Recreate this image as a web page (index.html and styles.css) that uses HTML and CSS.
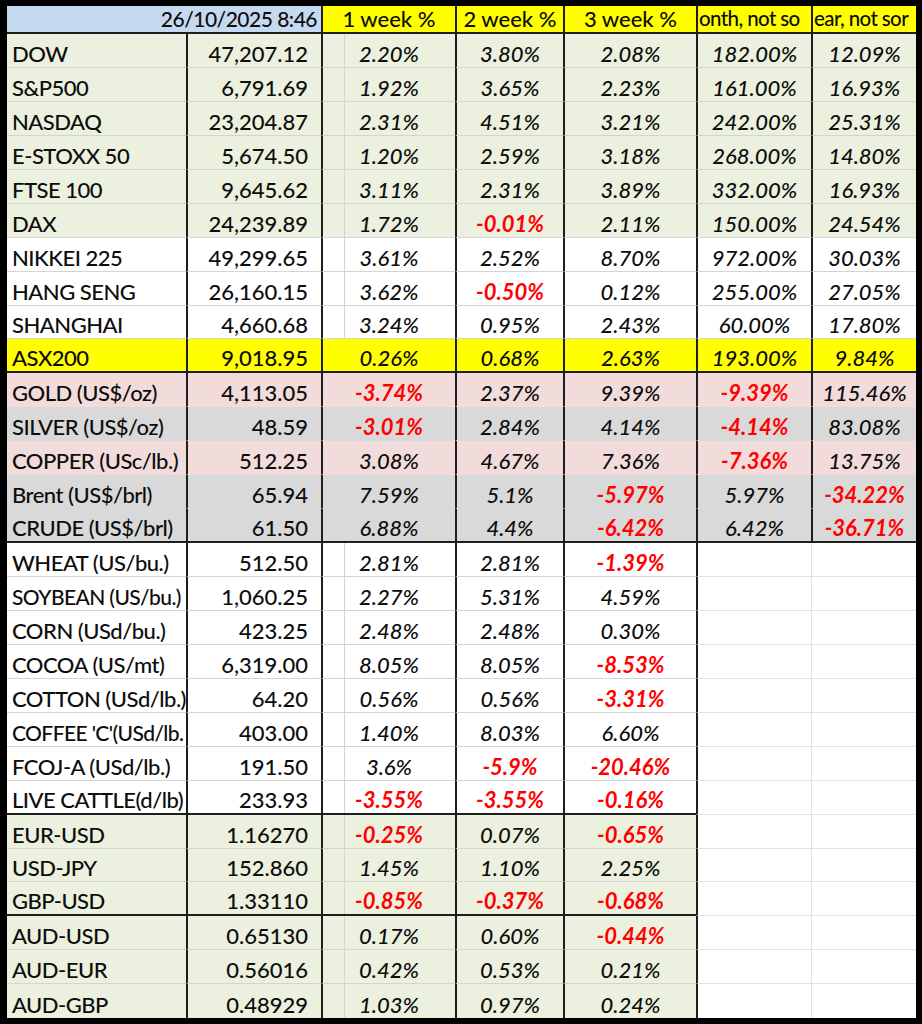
FILE: index.html
```html
<!DOCTYPE html>
<html>
<head>
<meta charset="utf-8">
<link rel="stylesheet" href="styles.css">
</head>
<body>
<div class="frame">
  <div class="sheet">
    <div class="hdr">
      <div class="date">26/10/2025 8:46</div>
      <div>1 week %</div>
      <div>2 week %</div>
      <div>3 week %</div>
      <div class="clip">onth, not so</div>
      <div class="clip">ear, not sor</div>
    </div>

    <div class="r gr"><div class="a">DOW</div><div class="b">47,207.12</div><div class="c">2.20%</div><div class="d">3.80%</div><div class="e">2.08%</div><div class="f">182.00%</div><div class="g">12.09%</div></div>
    <div class="r gr"><div class="a">S&amp;P500</div><div class="b">6,791.69</div><div class="c">1.92%</div><div class="d">3.65%</div><div class="e">2.23%</div><div class="f">161.00%</div><div class="g">16.93%</div></div>
    <div class="r gr"><div class="a">NASDAQ</div><div class="b">23,204.87</div><div class="c">2.31%</div><div class="d">4.51%</div><div class="e">3.21%</div><div class="f">242.00%</div><div class="g">25.31%</div></div>
    <div class="r gr"><div class="a">E-STOXX 50</div><div class="b">5,674.50</div><div class="c">1.20%</div><div class="d">2.59%</div><div class="e">3.18%</div><div class="f">268.00%</div><div class="g">14.80%</div></div>
    <div class="r gr"><div class="a">FTSE 100</div><div class="b">9,645.62</div><div class="c">3.11%</div><div class="d">2.31%</div><div class="e">3.89%</div><div class="f">332.00%</div><div class="g">16.93%</div></div>
    <div class="r gr"><div class="a">DAX</div><div class="b">24,239.89</div><div class="c">1.72%</div><div class="d neg">-0.01%</div><div class="e">2.11%</div><div class="f">150.00%</div><div class="g">24.54%</div></div>
    <div class="r wh"><div class="a">NIKKEI 225</div><div class="b">49,299.65</div><div class="c">3.61%</div><div class="d">2.52%</div><div class="e">8.70%</div><div class="f">972.00%</div><div class="g">30.03%</div></div>
    <div class="r wh"><div class="a">HANG SENG</div><div class="b">26,160.15</div><div class="c">3.62%</div><div class="d neg">-0.50%</div><div class="e">0.12%</div><div class="f">255.00%</div><div class="g">27.05%</div></div>
    <div class="r wh"><div class="a">SHANGHAI</div><div class="b">4,660.68</div><div class="c">3.24%</div><div class="d">0.95%</div><div class="e">2.43%</div><div class="f">60.00%</div><div class="g">17.80%</div></div>
    <div class="r ye end"><div class="a">ASX200</div><div class="b">9,018.95</div><div class="c">0.26%</div><div class="d">0.68%</div><div class="e">2.63%</div><div class="f">193.00%</div><div class="g">9.84%</div></div>

    <div class="r pk nb"><div class="a">GOLD (US$/oz)</div><div class="b">4,113.05</div><div class="c neg">-3.74%</div><div class="d">2.37%</div><div class="e">9.39%</div><div class="f neg">-9.39%</div><div class="g">115.46%</div></div>
    <div class="r gy nb"><div class="a">SILVER (US$/oz)</div><div class="b">48.59</div><div class="c neg">-3.01%</div><div class="d">2.84%</div><div class="e">4.14%</div><div class="f neg">-4.14%</div><div class="g">83.08%</div></div>
    <div class="r pk nb"><div class="a">COPPER (USc/lb.)</div><div class="b">512.25</div><div class="c">3.08%</div><div class="d">4.67%</div><div class="e">7.36%</div><div class="f neg">-7.36%</div><div class="g">13.75%</div></div>
    <div class="r gy nb"><div class="a">Brent (US$/brl)</div><div class="b">65.94</div><div class="c">7.59%</div><div class="d">5.1%</div><div class="e neg">-5.97%</div><div class="f">5.97%</div><div class="g neg">-34.22%</div></div>
    <div class="r gy end"><div class="a">CRUDE (US$/brl)</div><div class="b">61.50</div><div class="c">6.88%</div><div class="d">4.4%</div><div class="e neg">-6.42%</div><div class="f">6.42%</div><div class="g neg">-36.71%</div></div>

    <div class="r wh lo"><div class="a">WHEAT (US/bu.)</div><div class="b">512.50</div><div class="c">2.81%</div><div class="d">2.81%</div><div class="e neg">-1.39%</div><div class="f"></div><div class="g"></div></div>
    <div class="r wh lo"><div class="a long">SOYBEAN (US/bu.)</div><div class="b">1,060.25</div><div class="c">2.27%</div><div class="d">5.31%</div><div class="e">4.59%</div><div class="f"></div><div class="g"></div></div>
    <div class="r wh lo"><div class="a">CORN (USd/bu.)</div><div class="b">423.25</div><div class="c">2.48%</div><div class="d">2.48%</div><div class="e">0.30%</div><div class="f"></div><div class="g"></div></div>
    <div class="r wh lo"><div class="a">COCOA (US/mt)</div><div class="b">6,319.00</div><div class="c">8.05%</div><div class="d">8.05%</div><div class="e neg">-8.53%</div><div class="f"></div><div class="g"></div></div>
    <div class="r wh lo"><div class="a">COTTON (USd/lb.)</div><div class="b">64.20</div><div class="c">0.56%</div><div class="d">0.56%</div><div class="e neg">-3.31%</div><div class="f"></div><div class="g"></div></div>
    <div class="r wh lo"><div class="a long">COFFEE 'C'(USd/lb.</div><div class="b">403.00</div><div class="c">1.40%</div><div class="d">8.03%</div><div class="e">6.60%</div><div class="f"></div><div class="g"></div></div>
    <div class="r wh lo"><div class="a">FCOJ-A (USd/lb.)</div><div class="b">191.50</div><div class="c">3.6%</div><div class="d neg">-5.9%</div><div class="e neg">-20.46%</div><div class="f"></div><div class="g"></div></div>
    <div class="r wh lo end5"><div class="a">LIVE CATTLE(d/lb)</div><div class="b">233.93</div><div class="c neg">-3.55%</div><div class="d neg">-3.55%</div><div class="e neg">-0.16%</div><div class="f"></div><div class="g"></div></div>

    <div class="r gr lo"><div class="a">EUR-USD</div><div class="b">1.16270</div><div class="c neg">-0.25%</div><div class="d">0.07%</div><div class="e neg">-0.65%</div><div class="f"></div><div class="g"></div></div>
    <div class="r gr lo"><div class="a">USD-JPY</div><div class="b">152.860</div><div class="c">1.45%</div><div class="d">1.10%</div><div class="e">2.25%</div><div class="f"></div><div class="g"></div></div>
    <div class="r gr lo end5"><div class="a">GBP-USD</div><div class="b">1.33110</div><div class="c neg">-0.85%</div><div class="d neg">-0.37%</div><div class="e neg">-0.68%</div><div class="f"></div><div class="g"></div></div>
    <div class="r gr lo"><div class="a">AUD-USD</div><div class="b">0.65130</div><div class="c">0.17%</div><div class="d">0.60%</div><div class="e neg">-0.44%</div><div class="f"></div><div class="g"></div></div>
    <div class="r gr lo"><div class="a">AUD-EUR</div><div class="b">0.56016</div><div class="c">0.42%</div><div class="d">0.53%</div><div class="e">0.21%</div><div class="f"></div><div class="g"></div></div>
    <div class="r gr lo"><div class="a">AUD-GBP</div><div class="b">0.48929</div><div class="c">1.03%</div><div class="d">0.97%</div><div class="e">0.24%</div><div class="f"></div><div class="g"></div></div>
  </div>
</div>
</body>
</html>
```

FILE: styles.css
```css
:root {
  --dk: #1e1e1e;
  --lt: #d4d4d4;
  --lt2: #e2e2e2;
}

html, body {
  margin: 0;
  padding: 0;
  background: #000;
}

.frame {
  width: 922px;
  height: 1024px;
  box-sizing: border-box;
  padding: 6px 6px 6px 7px;
  background: #000;
}

.sheet {
  height: 1012px;
  display: flex;
  flex-direction: column;
  background: #fff;
  font-family: Lato, "Open Sans", "Liberation Sans", sans-serif;
  font-size: 22px;
  font-weight: 500;
  color: #0d0d0d;
}

.hdr,
.r {
  display: grid;
  grid-template-columns: 179px 135px 134px 108px 133px 115px 105px;
}

.hdr {
  height: 28px;
  flex: none;
}

.r {
  flex: 1 1 0;
  min-height: 0;
}

.hdr > div,
.r > div {
  box-sizing: border-box;
  display: flex;
  align-items: flex-end;
  white-space: nowrap;
  overflow: hidden;
  line-height: 22px;
  border-left: 2px solid var(--dk);
  border-bottom: 1px solid var(--lt);
}

/* header */
.hdr > div {
  font-size: 22px;
  line-height: 21px;
  padding-bottom: 3px;
  background: #ffff00;
  justify-content: center;
  border-bottom: 2px solid var(--dk);
}

.hdr > .date {
  grid-column: span 2;
  background: #c5d9f1;
  justify-content: flex-end;
  padding-right: 4px;
  border-left: 0;
  font-size: 21px;
  letter-spacing: -0.5px;
}

.hdr > .clip {
  justify-content: flex-start;
  padding-left: 1px;
  font-size: 20.5px;
  letter-spacing: -0.6px;
}

/* cells */
.r > div {
  padding-bottom: 2px;
}

.r > .a {
  border-left: 0;
  padding-left: 5px;
  letter-spacing: -0.5px;
}

.r > .a.long {
  font-size: 21px;
  letter-spacing: -0.6px;
}

.r > .b {
  justify-content: flex-end;
  padding-right: 13px;
}

.r > .c,
.r > .d,
.r > .e,
.r > .f,
.r > .g {
  justify-content: center;
  font-style: italic;
}

.r > .neg {
  color: #ff0000;
  font-weight: 700;
}

/* row fills */
.gr { background: #ebf1de; }
.wh { background: #ffffff; }
.ye { background: #ffff00; }
.pk { background: #f2dcdb; }
.gy { background: #d9d9d9; }

.gr > .c,
.wh > .c {
  background-image: linear-gradient(90deg, transparent 21px, var(--lt) 21px, var(--lt) 22px, transparent 22px);
}

.nb > div {
  border-bottom-color: transparent;
}

.end > div {
  border-bottom: 2px solid var(--dk);
}

.lo > .f,
.lo > .g {
  background: #fff;
  border-bottom-color: var(--lt2);
}

.lo > .g {
  border-left: 1px solid var(--lt2);
}

.end5 > .a,
.end5 > .b,
.end5 > .c,
.end5 > .d,
.end5 > .e {
  border-bottom: 2px solid var(--dk);
}

.r:last-child > div {
  border-bottom: 0;
}
```
